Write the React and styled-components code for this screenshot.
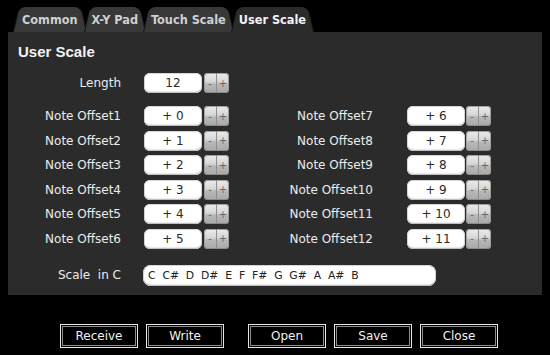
import React from "react";
import styled, { createGlobalStyle } from "styled-components";

const GlobalStyle = createGlobalStyle`
  html, body { margin: 0; padding: 0; background: #000; }
  body {
    width: 550px;
    height: 355px;
    overflow: hidden;
    font-family: "DejaVu Sans", "Liberation Sans", sans-serif;
  }
`;

const Page = styled.div`
  padding-top: 7px;
`;

const TabBar = styled.div`
  display: flex;
  height: 25px;
  padding-left: 14px;
`;

const Tab = styled.div`
  position: relative;
  z-index: ${(p) => (p.$active ? 2 : 1)};
  height: 25px;
  line-height: 26px;
  padding: 0 ${(p) => p.$pad || 10}px;
  margin-right: -1px;
  font-family: "DejaVu Sans Condensed", "DejaVu Sans", sans-serif;
  font-weight: bold;
  font-size: 12.6px;
  color: ${(p) => (p.$active ? "#f2f2f2" : "#d0d0d0")};
  isolation: isolate;

  &::before,
  &::after {
    content: "";
    position: absolute;
    top: 0;
    bottom: 0;
    z-index: -1;
    background: ${(p) => (p.$active ? "#2b2b2b" : "#383838")};
    transform-origin: bottom;
  }
  &::before {
    left: 0;
    right: 40%;
    border-radius: 6px 0 0 0;
    transform: skewX(-13deg);
    box-shadow: -1px 0 0 #161616;
  }
  &::after {
    left: 40%;
    right: 0;
    border-radius: 0 6px 0 0;
    transform: skewX(13deg);
    box-shadow: 1px 0 0 #161616;
  }
`;

const Panel = styled.div`
  margin: 0 8px;
  height: 263px;
  box-sizing: border-box;
  padding: 11px 10px 0 10px;
  background: #2b2b2b;
  position: relative;
  z-index: 1;
`;

const Heading = styled.div`
  font-family: "Liberation Sans", Arial, sans-serif;
  font-weight: bold;
  font-size: 15px;
  line-height: 18px;
  color: #f2f2f2;
  margin-bottom: 12px;
`;

const Row = styled.div`
  display: flex;
  align-items: center;
  height: 20px;
`;

const Label = styled.div`
  width: 103px;
  flex: none;
  text-align: right;
  margin-right: ${(p) => p.$gap}px;
  font-size: 12px;
  color: #ececec;
  white-space: pre;
`;

const ValueBox = styled.div`
  width: 58px;
  height: 20px;
  box-sizing: border-box;
  background: #fff;
  border-radius: 6px;
  box-shadow: inset 0 -2px 2px -1px #b8b8b8, inset 0 0 0 1px #d6d6d6;
  text-align: center;
  line-height: 20px;
  font-size: 12px;
  color: #2a2a2a;
  white-space: pre;
`;

const Stepper = styled.div`
  display: flex;
  width: 25px;
  height: 20px;
  margin-left: ${(p) => p.$gap}px;
  border-radius: 4px;
  overflow: hidden;
  background: linear-gradient(#ececec 0%, #d6d6d6 45%, #b8b8b8 55%, #a8a8a8 100%);
  box-shadow: inset 0 -1px 0 #8a8a8a, inset 0 0 0 1px #a0a0a0;
`;

const StepHalf = styled.div`
  flex: 1;
  display: flex;
  align-items: center;
  justify-content: center;
  font-size: 10px;
  font-family: "DejaVu Sans", sans-serif;
  color: #686868;
  & + & {
    border-left: 1px solid #8e8e8e;
  }
`;

const Columns = styled.div`
  display: grid;
  grid-template-columns: 211px auto;
  column-gap: 41px;
  margin-top: 13px;
`;

const Column = styled.div`
  display: flex;
  flex-direction: column;
  gap: 4.6px;
`;

const ScaleRow = styled.div`
  display: flex;
  align-items: center;
  margin-top: 16px;
`;

const ScaleField = styled.div`
  width: 293px;
  height: 21px;
  box-sizing: border-box;
  background: #fff;
  border-radius: 8px;
  box-shadow: inset 0 -2px 2px -1px #b8b8b8, inset 0 0 0 1px #d6d6d6;
  padding-left: 5px;
  line-height: 21px;
  font-size: 10.8px;
  color: #222;
  white-space: pre;
`;

const ButtonBar = styled.div`
  display: flex;
  gap: 24px;
  padding-left: 60px;
  margin-top: 29px;
`;

const ButtonGroup = styled.div`
  display: flex;
  gap: 8px;
`;

const Button = styled.div`
  width: 78px;
  height: 24px;
  box-sizing: border-box;
  border: 1px solid #e6e6e6;
  box-shadow: inset 0 0 0 1px #000, inset 0 0 0 2px #8c8c8c;
  display: flex;
  align-items: center;
  justify-content: center;
  font-size: 12px;
  color: #f0f0f0;
  background: #000;
`;

function Field({ label, value, labelGap, stepGap }) {
  return (
    <Row>
      <Label $gap={labelGap}>{label}</Label>
      <ValueBox>{value}</ValueBox>
      <Stepper $gap={stepGap}>
        <StepHalf>-</StepHalf>
        <StepHalf>+</StepHalf>
      </Stepper>
    </Row>
  );
}

export default function App() {
  const left = [0, 1, 2, 3, 4, 5];
  const right = [6, 7, 8, 9, 10, 11];
  return (
    <Page>
      <GlobalStyle />
      <TabBar>
        <Tab $pad={8}>Common</Tab>
        <Tab $pad={7}>X-Y Pad</Tab>
        <Tab $pad={7}>Touch Scale</Tab>
        <Tab $active $pad={7}>User Scale</Tab>
      </TabBar>
      <Panel>
        <Heading>User Scale</Heading>
        <Field label="Length" value="12" labelGap={23} stepGap={2} />
        <Columns>
          <Column>
            {left.map((n) => (
              <Field
                key={n}
                label={`Note Offset${n + 1}`}
                value={`+ ${n}`}
                labelGap={23}
                stepGap={2}
              />
            ))}
          </Column>
          <Column>
            {right.map((n) => (
              <Field
                key={n}
                label={`Note Offset${n + 1}`}
                value={`+ ${n}`}
                labelGap={34}
                stepGap={1}
              />
            ))}
          </Column>
        </Columns>
        <ScaleRow>
          <Label $gap={22}>{"Scale  in C"}</Label>
          <ScaleField>{"C  C#  D  D#  E  F  F#  G  G#  A  A#  B"}</ScaleField>
        </ScaleRow>
      </Panel>
      <ButtonBar>
        <ButtonGroup>
          <Button>Receive</Button>
          <Button>Write</Button>
        </ButtonGroup>
        <ButtonGroup>
          <Button>Open</Button>
          <Button>Save</Button>
          <Button>Close</Button>
        </ButtonGroup>
      </ButtonBar>
    </Page>
  );
}
